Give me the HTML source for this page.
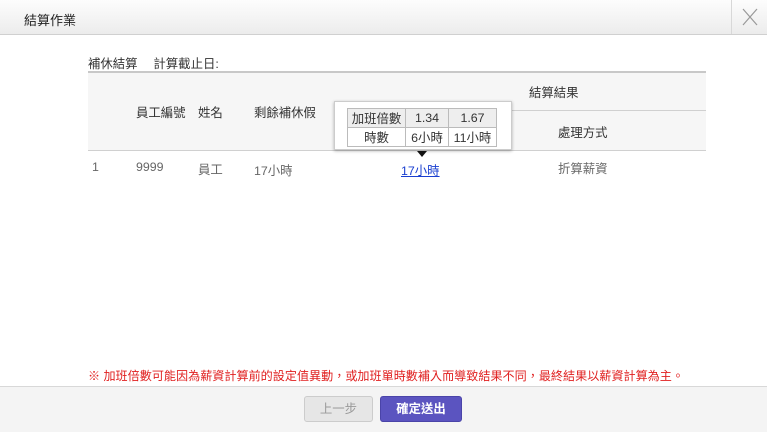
<!DOCTYPE html>
<html><head><meta charset="utf-8"><style>
*{margin:0;padding:0;box-sizing:border-box}
body{width:767px;height:432px;overflow:hidden;background:#fff;font-family:"Liberation Sans","Noto Sans CJK TC",sans-serif;font-size:12.4px;color:#333;position:relative}
.hd{position:absolute;left:0;top:0;width:767px;height:35px;background:linear-gradient(#fdfdfd,#ececec);border-bottom:1px solid #d0d0d0}
.hd .t{position:absolute;left:24px;top:10px;font-size:13px;color:#222}
.hd .x{position:absolute;left:731px;top:0;width:36px;height:34px;border-left:1px solid #d8d8d8}
.a{position:absolute;white-space:nowrap}
.thbg{position:absolute;left:88px;top:71px;width:618px;height:80px;background:#f6f6f6;border-top:2px solid #c8c8c8;border-bottom:1px solid #d0d0d0}
.tip{position:absolute;left:334px;top:101px;width:178px;height:49px;background:#fff;border:1px solid #ccc;box-shadow:0 1px 3px rgba(0,0,0,.3)}
.tip table{position:absolute;left:12px;top:6px;border-collapse:collapse}
.tip td{border:1px solid #bbb;height:17px;text-align:center;font-size:12.4px;padding:0}
.ft{position:absolute;left:0;top:386px;width:767px;height:46px;background:#f4f4f4;border-top:1px solid #d8d8d8}
.b{position:absolute;top:396px;height:26px;border-radius:3px;text-align:center;line-height:24px;font-size:12.4px}
</style></head><body>
<div class="hd"><div class="t">結算作業</div><div class="x"><svg width="36" height="34"><path d="M11 9L25 25M25 9L11 25" stroke="#999" stroke-width="1.2"/></svg></div></div>
<div class="a" style="left:88px;top:54px">補休結算　 計算截止日:</div>
<div class="thbg"></div>
<div style="position:absolute;left:402px;top:110px;width:304px;height:1px;background:#d0d0d0"></div>
<div class="a" style="left:136px;top:103px">員工編號</div>
<div class="a" style="left:198px;top:103px">姓名</div>
<div class="a" style="left:254px;top:103px">剩餘補休假</div>
<div class="a" style="left:529px;top:83px">結算結果</div>
<div class="a" style="left:558px;top:123px">處理方式</div>
<div class="tip"><table>
<tr style="background:#eee"><td style="width:58px">加班倍數</td><td style="width:43px">1.34</td><td style="width:48px">1.67</td></tr>
<tr><td>時數</td><td>6小時</td><td>11小時</td></tr></table></div>
<svg style="position:absolute;left:417px;top:151px" width="11" height="7"><path d="M0 0H10L5 6Z" fill="#111"/></svg>
<div class="a" style="left:92px;top:160px;color:#666">1</div>
<div class="a" style="left:136px;top:160px;color:#666">9999</div>
<div class="a" style="left:198px;top:160px;color:#666">員工</div>
<div class="a" style="left:254px;top:161px;color:#666">17小時</div>
<div class="a" style="left:401px;top:161px;color:#1a3fd0;text-decoration:underline">17小時</div>
<div class="a" style="left:558px;top:159px;color:#666">折算薪資</div>
<div class="a" style="left:88px;top:367px;color:#e02020;font-size:12.1px">※ 加班倍數可能因為薪資計算前的設定值異動，或加班單時數補入而導致結果不同，最終結果以薪資計算為主。</div>
<div class="ft"></div>
<div class="b" style="left:304px;width:69px;background:#e6e6e6;border:1px solid #ccc;color:#999">上一步</div>
<div class="b" style="left:380px;width:82px;background:#5b54c0;border:1px solid #4a44a8;color:#fff;font-weight:bold">確定送出</div>
</body></html>
